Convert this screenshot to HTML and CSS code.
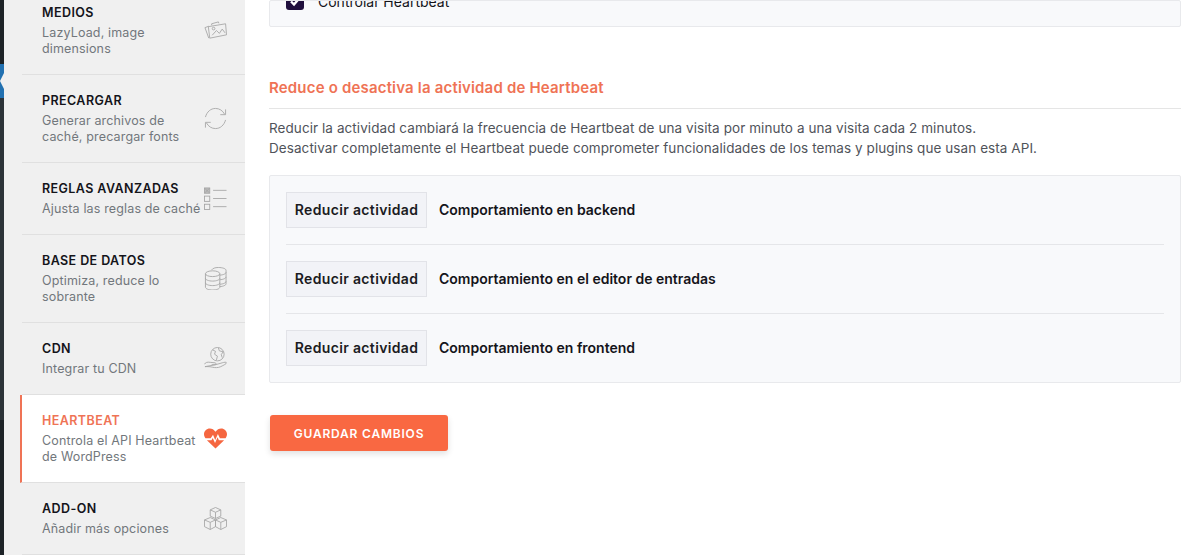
FILE: index.html
```html
<!DOCTYPE html>
<html lang="es">
<head>
<meta charset="utf-8">
<title>Heartbeat</title>
<link rel="stylesheet" href="styles.css">
</head>
<body>
<div class="page">
  <div class="adminbar">
    <div class="adminbar-top"></div>
    <div class="adminbar-current"><span class="notch"></span></div>
    <div class="adminbar-mid"></div>
    <div class="adminbar-bottom"></div>
  </div>
  <nav class="sidebar">
    <a class="item two">
      <div class="item-text"><div class="item-title">MEDIOS</div><div class="item-sub">LazyLoad, image dimensions</div></div>
      <svg class="icon" viewBox="0 0 24 24" fill="none" stroke="currentColor" stroke-width="0.9"><path d="M5 20 1 9 5 7.500"/><path d="M4.500 8 22.500 5l1 11.500-17.500 3.500z"/><path d="M8 6.500V5l7-2 .5 1.500"/><circle cx="10" cy="10" r="1.400"/><path d="M8.500 17l4.500-5 3 3 3-4.500 3 4"/></svg>
    </a>
    <a class="item two">
      <div class="item-text"><div class="item-title">PRECARGAR</div><div class="item-sub">Generar archivos de caché, precargar fonts</div></div>
      <svg class="icon" viewBox="0 0 24 24" fill="none" stroke="currentColor" stroke-width="0.9"><path d="M1.500 10.500C3 5 7 1.500 12 1.500c4 0 7.500 2.200 9.500 6"/><path d="M22.500 2.500v5.500H17"/><path d="M22.500 13.500C21 19 17 22.500 12 22.500c-4 0-7.500-2.200-9.500-6"/><path d="M1.500 21.500V16H7"/></svg>
    </a>
    <a class="item one">
      <div class="item-text"><div class="item-title">REGLAS AVANZADAS</div><div class="item-sub">Ajusta las reglas de caché</div></div>
      <svg class="icon" viewBox="0 0 24 24" fill="none" stroke="currentColor" stroke-width="0.9"><rect x="0.500" y="1" width="5.500" height="5.500" fill="#bdbdbd"/><path d="M1 1.500l4.500 4.500M5.500 1.500 1 6"/><rect x="0.500" y="9.500" width="5.500" height="5.500"/><rect x="0.500" y="18" width="5.500" height="5.500"/><path d="M9.500 3.500H23.500M9.500 12H23.500M9.500 20.500H23.500"/></svg>
    </a>
    <a class="item two">
      <div class="item-text"><div class="item-title">BASE DE DATOS</div><div class="item-sub">Optimiza, reduce lo sobrante</div></div>
      <svg class="icon" viewBox="0 0 24 24" fill="none" stroke="currentColor" stroke-width="0.9"><ellipse cx="9" cy="7" rx="7.500" ry="3"/><path d="M1.500 7v14c0 1.700 3.300 3 7.500 3s7.500-1.300 7.500-3V7"/><path d="M1.500 11.700c0 1.700 3.300 3 7.500 3s7.500-1.300 7.500-3M1.500 16.400c0 1.700 3.300 3 7.500 3s7.500-1.300 7.500-3"/><path d="M8 3c1-1.500 3.500-2.500 7-2.500 4.400 0 8 1.300 8 3v14c0 1.500-2.800 2.700-6.500 3"/><path d="M16.500 8.500c3.500-.2 6.500-1.400 6.500-3M16.500 13.300c3.500-.2 6.500-1.400 6.500-3M16.500 18c3.500-.2 6.500-1.400 6.500-3"/></svg>
    </a>
    <a class="item one">
      <div class="item-text"><div class="item-title">CDN</div><div class="item-sub">Integrar tu CDN</div></div>
      <svg class="icon" viewBox="0 0 24 24" fill="none" stroke="currentColor" stroke-width="0.9"><circle cx="14" cy="7.500" r="7"/><path d="M9 3l3 1.500-1 3 3 2-1 4M15 1l1 3 4 1-2 3 1 3"/><path d="M.5 18c1-2 3-2.500 6-2l5 .5c1.500.2 1.500 2 0 2H8m4 0 7-2c2-.6 4.500-1 4.500 0 0 1-3 2.500-6 4-3 1.300-6 1.300-9 .5-3-.8-6-.5-7.500-.5z"/></svg>
    </a>
    <a class="item two active">
      <div class="item-text"><div class="item-title">HEARTBEAT</div><div class="item-sub">Controla el API Heartbeat de WordPress</div></div>
      <svg class="icon" viewBox="0 0 24 24"><path fill="#f56640" d="M12 22.500 3 13.800h4.800l1.300-2.300 2.400 5.300 2.700-6 1.300 3h5.500zM1.500 11.800C.6 10.500 0 9.200 0 7.600 0 4 2.800 1.500 6 1.500c2.400 0 4.500 1.200 6 3.500 1.500-2.300 3.600-3.500 6-3.500 3.200 0 6 2.500 6 6.100 0 1.600-.6 2.900-1.500 4.200h-5.900l-2.100-4.600-2.800 6.300-2.300-5.300-2.400 3.600z"/></svg>
    </a>
    <a class="item one">
      <div class="item-text"><div class="item-title">ADD-ON</div><div class="item-sub">Añadir más opciones</div></div>
      <svg class="icon" viewBox="0 0 24 24" fill="none" stroke="currentColor" stroke-width="0.9"><path d="M12 .5 17.500 3v6.500L12 12 6.500 9.500V3zM6.500 3 12 5.500 17.500 3M12 5.500V12"/><path d="M6.500 11 12 13.500v7L6.500 23.500 .5 20.500v-7zM.5 13.500 6.500 16 12 13.500M6.500 16v7.500"/><path d="M17.500 11 23.500 13.500v7l-6 3L12 20.500v-7zM12 13.500l5.500 2.500 6-2.500M17.500 16v7.500"/></svg>
    </a>
  </nav>
  <main class="content">
    <section class="card top-card">
      <label class="check-row"><span class="checkbox"><svg viewBox="0 0 18 18" width="18" height="18" fill="none" stroke="#fff" stroke-width="2.400"><path d="M5 9.500 8 12.500 13.500 6"/></svg></span><span class="check-label">Controlar Heartbeat</span></label>
    </section>
    <h2 class="section-title">Reduce o desactiva la actividad de Heartbeat</h2>
    <p class="section-desc">Reducir la actividad cambiará la frecuencia de Heartbeat de una visita por minuto a una visita cada 2 minutos.<br>Desactivar completamente el Heartbeat puede comprometer funcionalidades de los temas y plugins que usan esta API.</p>
    <section class="card options">
      <div class="option"><span class="select">Reducir actividad</span><span class="option-label">Comportamiento en backend</span></div>
      <div class="option"><span class="select">Reducir actividad</span><span class="option-label">Comportamiento en el editor de entradas</span></div>
      <div class="option"><span class="select">Reducir actividad</span><span class="option-label">Comportamiento en frontend</span></div>
    </section>
    <button class="save">GUARDAR CAMBIOS</button>
  </main>
</div>
</body>
</html>
```
FILE: styles.css
```css
* { box-sizing: border-box; }
html, body { margin: 0; height: 100%; overflow: hidden; background: #fff; }
body { font-family: Inter, "Liberation Sans", sans-serif; color: #14141a; }
.page { display: flex; height: 555px; overflow: hidden; }

.adminbar { width: 4px; flex: none; display: flex; flex-direction: column; }
.adminbar-top { height: 64px; background: #1d2327; }
.adminbar-current { height: 34px; background: #2271b1; display: flex; align-items: center; justify-content: flex-end; }
.notch { width: 0; height: 0; border-top: 8px solid transparent; border-bottom: 8px solid transparent; border-right: 4px solid #f0f0f0; }
.adminbar-mid { height: 322px; background: #2c3338; }
.adminbar-bottom { flex: 1; background: #1d2327; }

.sidebar { width: 241px; flex: none; background: #f0f0f0; padding-left: 18px; margin-top: -13px; height: 568px; overflow: hidden; }
.item { display: flex; justify-content: space-between; align-items: center; padding: 0 18px 0 20px; border-bottom: 1px solid #e0e0e0; }
.item.two { height: 88px; }
.item.one { height: 72px; }
.item-text { width: 162px; flex: none; padding-top: 1px; }
.item-title { font-size: 12.500px; line-height: 14px; font-weight: 600; letter-spacing: .42px; color: #14141a; margin-bottom: 5px; }
.item-sub { font-size: 12.500px; line-height: 16px; letter-spacing: .15px; color: #72777c; }
.icon { width: 23px; height: 23px; flex: none; color: #a4a4a4; }
.item.active { background: #fff; margin-left: -2px; border-left: 2px solid #ef7355; }
.item.active .item-title { color: #ef7355; }

.content { flex: 1; padding: 0 5px 0 24px; min-width: 0; }
.card { background: #f8f9fb; border: 1px solid #e8e9ec; border-radius: 2px; }
.top-card { height: 27px; padding-left: 16px; overflow: hidden; }
.check-row { display: flex; align-items: flex-start; gap: 14px; margin-top: -9px; }
.checkbox { width: 18px; height: 18px; flex: none; border-radius: 3px; background: #1f0f3d; display: block; }
.checkbox svg { display: block; }
.check-label { font-size: 14px; line-height: 19px; color: #14141a; }
.section-title { margin: 50px 0 0; height: 32px; padding-top: 1px; font-size: 15px; line-height: 20px; font-weight: 600; letter-spacing: .18px; color: #ef7355; border-bottom: 1px solid #e5e5e5; }
.section-desc { margin: 9px 0 17px; font-size: 13.500px; line-height: 20px; color: #50535a; letter-spacing: .07px; }
.options { padding: 0 16px; height: 208px; }
.option { display: flex; align-items: center; gap: 12px; padding: 16px 0; border-bottom: 1px solid #e5e6e9; }
.option:last-child { border-bottom: 0; }
.select { width: 141px; height: 36px; padding-bottom: 2px; display: flex; align-items: center; justify-content: center; background: #f2f3f7; border: 1px solid #e2e3e8; font-size: 14px; font-weight: 600; letter-spacing: .35px; color: #1b1b22; }
.option-label { font-size: 14px; padding-bottom: 2px; font-weight: 600; color: #14141a; }
.save { display: block; margin: 32px 0 0 1px; width: 178px; height: 36px; background: #f96842; border: 0; border-radius: 3px; color: #fff; font: 600 12px Inter, sans-serif; letter-spacing: .8px; box-shadow: 0 3px 6px rgba(0,0,0,.12); }
```
